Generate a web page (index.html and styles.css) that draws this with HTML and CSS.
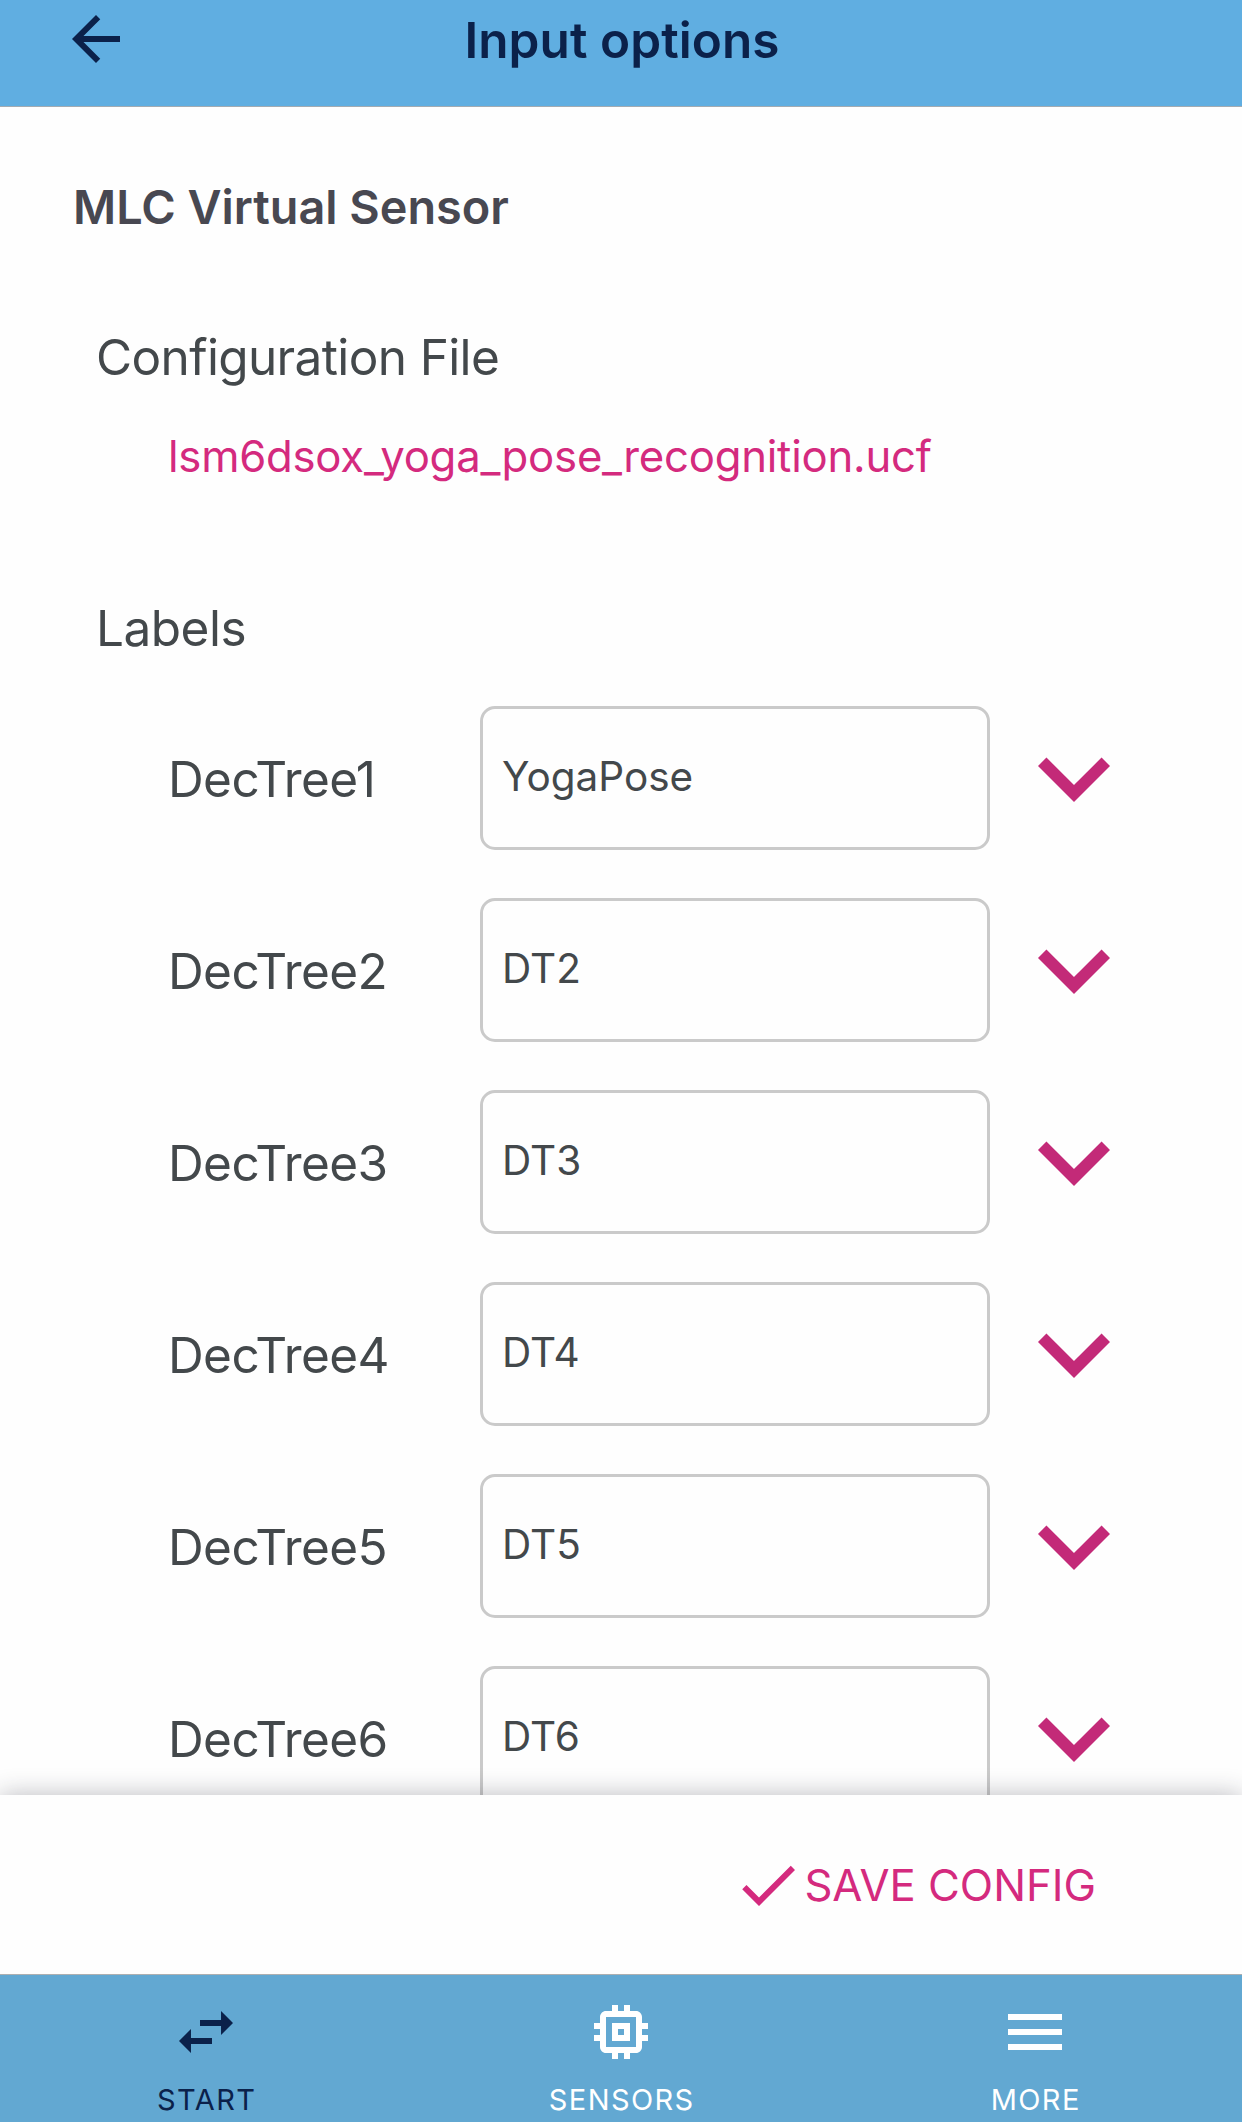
FILE: index.html
```html
<!DOCTYPE html>
<html lang="en">
<head>
<meta charset="utf-8">
<title>Input options</title>
<link rel="stylesheet" href="styles.css">
</head>
<body>
<svg width="0" height="0" class="symbols" aria-hidden="true">
  <symbol id="chevron" viewBox="0 0 24 24"><path d="M7.41 8.59 12 13.17l4.59-4.58L18 10l-6 6-6-6z"/></symbol>
</svg>
<div class="screen">
  <header class="topbar">
    <svg class="back" viewBox="0 0 24 24"><path d="M20 11H7.83l5.59-5.59L12 4l-8 8 8 8 1.41-1.41L7.83 13H20z"/></svg>
    <h1 class="title">Input options</h1>
  </header>
  <main class="content">
    <h2 class="sensor">MLC Virtual Sensor</h2>
    <h3 class="section config">Configuration File</h3>
    <a class="file">lsm6dsox_yoga_pose_recognition.ucf</a>
    <h3 class="section labels">Labels</h3>
    <div class="rows">
      <div class="row"><span class="name">DecTree1</span><div class="field">YogaPose</div><svg class="expand"><use href="#chevron"/></svg></div>
      <div class="row"><span class="name">DecTree2</span><div class="field">DT2</div><svg class="expand"><use href="#chevron"/></svg></div>
      <div class="row"><span class="name">DecTree3</span><div class="field">DT3</div><svg class="expand"><use href="#chevron"/></svg></div>
      <div class="row"><span class="name">DecTree4</span><div class="field">DT4</div><svg class="expand"><use href="#chevron"/></svg></div>
      <div class="row"><span class="name">DecTree5</span><div class="field">DT5</div><svg class="expand"><use href="#chevron"/></svg></div>
      <div class="row"><span class="name">DecTree6</span><div class="field">DT6</div><svg class="expand"><use href="#chevron"/></svg></div>
    </div>
  </main>
  <footer class="actions">
    <div class="save">
      <svg class="icon" viewBox="0 0 24 24"><path d="M9 16.17 4.83 12l-1.42 1.41L9 19 21 7l-1.41-1.41z"/></svg>
      <span>SAVE CONFIG</span>
    </div>
  </footer>
  <nav class="tabs">
    <div class="tab active">
      <svg class="icon" viewBox="0 0 24 24"><path d="M6.99 11 3 15l3.99 4v-3H14v-2H6.99zM21 9l-3.99-4v3H10v2h7.01v3z"/></svg>
      <span class="tab-label">START</span>
    </div>
    <div class="tab">
      <svg class="icon" viewBox="0 0 24 24"><path d="M15 9H9v6h6zm-2 4h-2v-2h2zm8-2V9h-2V7c0-1.1-.9-2-2-2h-2V3h-2v2h-2V3H9v2H7c-1.1 0-2 .9-2 2v2H3v2h2v2H3v2h2v2c0 1.1.9 2 2 2h2v2h2v-2h2v2h2v-2h2c1.1 0 2-.9 2-2v-2h2v-2h-2v-2zm-4 6H7V7h10z"/></svg>
      <span class="tab-label">SENSORS</span>
    </div>
    <div class="tab">
      <svg class="icon" viewBox="0 0 24 24"><path d="M3 18h18v-2H3zm0-5h18v-2H3zm0-7v2h18V6z"/></svg>
      <span class="tab-label">MORE</span>
    </div>
  </nav>
</div>
</body>
</html>
```
FILE: styles.css
```css
* { box-sizing: border-box; margin: 0; padding: 0; }

body {
  font-family: Inter, "Liberation Sans", sans-serif;
  background: #fefefe;
  color: #43484b;
}

svg { display: block; flex: none; fill: currentColor; }
.symbols { display: none; }
.icon { width: 72px; height: 72px; }

.screen {
  display: flex;
  flex-direction: column;
  width: 1242px;
  height: 2122px;
  overflow: hidden;
}

.topbar {
  flex: none;
  display: grid;
  grid-template-columns: 72px 1fr 72px;
  align-items: start;
  height: 107px;
  padding: 0 60px;
  background: #60aee1;
  border-bottom: 1px solid #a3abb2;
  color: #0b214a;
}
.back { width: 72px; height: 72px; margin-top: 3px; }
.title {
  padding-left: 2px;
  font-size: 49.5px;
  font-weight: 600;
  line-height: 80px;
  letter-spacing: .08px;
  text-align: center;
}

.content {
  flex: none;
  height: 1688px;
  padding: 70px 72px 0;
  overflow: hidden;
}
.sensor {
  padding-left: 1px;
  font-size: 46.8px;
  font-weight: 600;
  line-height: 60px;
  color: #484851;
}
.section {
  padding-left: 24px;
  font-size: 49.5px;
  font-weight: 400;
  line-height: 60px;
}
.config { margin-top: 90px; letter-spacing: -.63px; }
.labels { margin-top: 111px; letter-spacing: -.5px; }
.file {
  display: block;
  margin-top: 40px;
  padding-left: 96px;
  font-size: 43.7px;
  line-height: 60px;
  letter-spacing: -.24px;
  color: #d42a7e;
}

.rows {
  display: flex;
  flex-direction: column;
  gap: 48px;
  margin-top: 48px;
  padding-left: 96px;
}
.row {
  display: grid;
  grid-template-columns: 312px 510px 156px;
  height: 144px;
}
.name {
  font-size: 49.5px;
  line-height: 146px;
  letter-spacing: -.6px;
}
.field {
  height: 144px;
  padding-left: 19px;
  border: 3px solid #cacaca;
  border-radius: 15px;
  font-size: 40.5px;
  line-height: 136px;
}
.expand {
  width: 144px;
  height: 144px;
  margin-left: 12px;
  color: #c32a78;
}

.actions {
  flex: none;
  position: relative;
  display: flex;
  justify-content: flex-end;
  align-items: flex-start;
  height: 179px;
  padding: 54px 146px 0 0;
  background: #fefefe;
  box-shadow: 0 0 24px rgba(30, 30, 45, .3);
}
.save {
  display: flex;
  font-size: 43.6px;
  line-height: 73px;
  color: #d42a7e;
}

.tabs {
  flex: none;
  position: relative;
  display: grid;
  grid-template-columns: 412px 418px 410px;
  height: 148px;
  padding-top: 21px;
  background: #62a8d2;
  border-top: 1px solid #adafb0;
  color: #fff;
}
.tab { display: flex; flex-direction: column; align-items: center; }
.active { color: #0b214a; }
.tab-label {
  margin-top: 12px;
  padding-left: 1.4px;
  font-size: 29px;
  line-height: 40px;
  letter-spacing: 1.4px;
}
```
